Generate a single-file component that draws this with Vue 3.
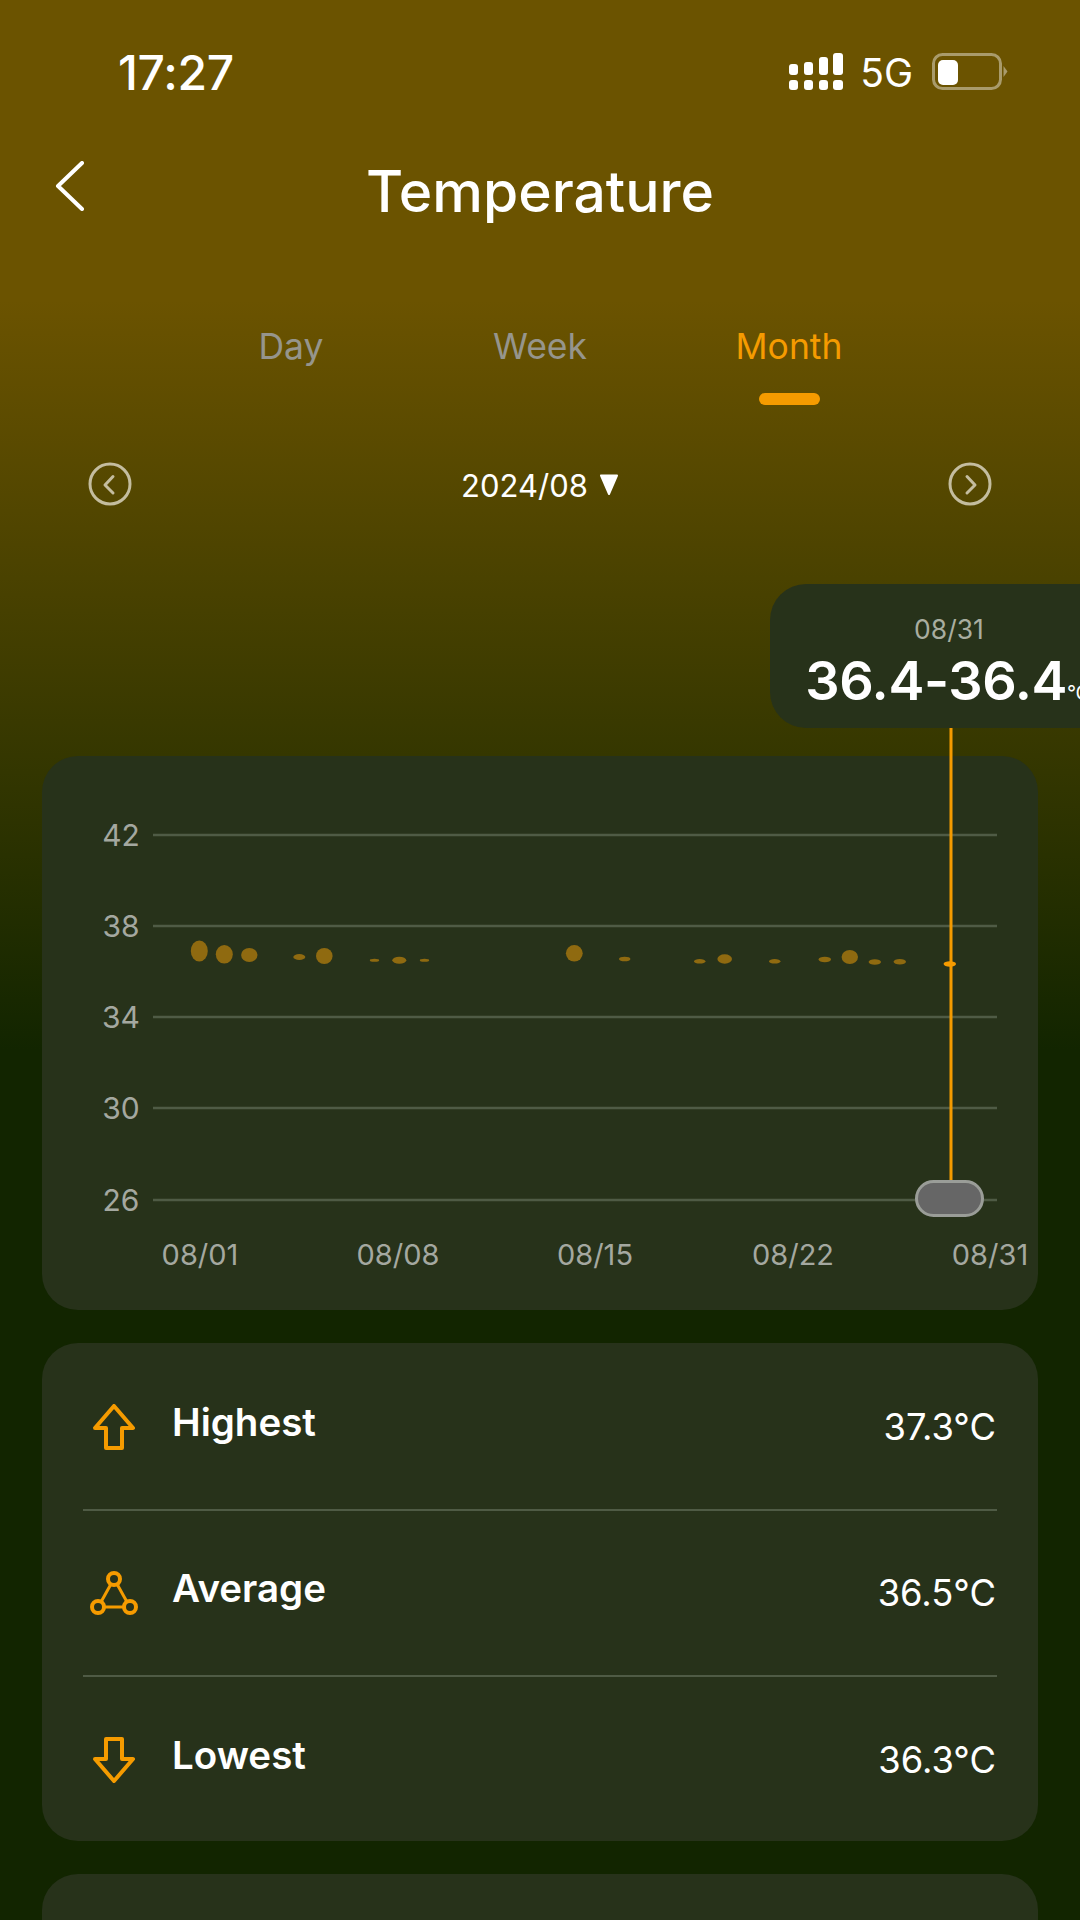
<script setup>
const tabs = [
  { name: "Day" },
  { name: "Week" },
  { name: "Month", active: true },
]

const gridLines = [
  { label: "42", y: 835 },
  { label: "38", y: 926 },
  { label: "34", y: 1017 },
  { label: "30", y: 1108 },
  { label: "26", y: 1200 },
]

const dates = [
  { label: "08/01", x: 200 },
  { label: "08/08", x: 398 },
  { label: "08/15", x: 595 },
  { label: "08/22", x: 793 },
  { label: "08/31", x: 990 },
]

const bubbles = [
  [199.3, 951, 8.5, 10.5],
  [224.3, 954.3, 8.5, 9.3],
  [249.3, 955, 8.2, 7],
  [299.3, 957, 6, 3],
  [324.3, 956, 8.3, 8],
  [374.5, 960.3, 4.7, 1.5],
  [399.3, 960.3, 7, 3.5],
  [424.5, 960.3, 4.7, 1.5],
  [574.3, 953.3, 8.4, 8.3],
  [624.7, 959, 5.7, 2.3],
  [699.7, 961.3, 5.7, 2.3],
  [724.7, 959, 7.3, 4.7],
  [774.7, 961.3, 5.7, 2.3],
  [824.8, 959.5, 6.2, 2.7],
  [849.8, 957, 8.2, 7],
  [874.8, 962, 6.2, 2.8],
  [899.8, 961.7, 6.2, 2.8],
]

const stats = [
  { name: "Highest", value: "37.3°C", icon: "up" },
  { name: "Average", value: "36.5°C", icon: "avg" },
  { name: "Lowest", value: "36.3°C", icon: "down" },
]
</script>

<template>
  <main class="page">
    <div class="status">
      <span class="time">17:27</span>
      <div class="status-right">
        <svg class="signal" width="54" height="38" viewBox="0 0 54 38">
          <rect x="0" y="11" width="9" height="11" rx="3" />
          <rect x="15" y="9" width="9" height="13" rx="3" />
          <rect x="30" y="4" width="9" height="18" rx="3" />
          <rect x="44" y="0" width="10" height="22" rx="3" />
          <rect x="0" y="27" width="9" height="10" rx="3" />
          <rect x="15" y="27" width="9" height="10" rx="3" />
          <rect x="30" y="27" width="9" height="10" rx="3" />
          <rect x="44" y="27" width="10" height="10" rx="3" />
        </svg>
        <span class="net">5G</span>
        <svg class="battery" width="76" height="38" viewBox="0 0 76 38">
          <rect x="1.500" y="1.500" width="67" height="34" rx="9" fill="none" stroke="#fff" stroke-opacity="0.42" stroke-width="3" />
          <rect x="6" y="7" width="20" height="25" rx="5" fill="#fff" />
          <path d="M71.500 13 L75.500 18.500 L71.500 24 Z" fill="#fff" fill-opacity="0.42" />
        </svg>
      </div>
    </div>

    <header class="nav">
      <svg class="back" width="30" height="50" viewBox="0 0 30 50">
        <path d="M27 2 L3 25 L27 48" fill="none" stroke="#fff" stroke-width="4" stroke-linecap="round" stroke-linejoin="round" />
      </svg>
      <h1>Temperature</h1>
    </header>

    <div class="tabs">
      <div v-for="tab in tabs" :key="tab.name" class="tab" :class="{ active: tab.active }">
        <span>{{ tab.name }}</span>
        <i></i>
      </div>
    </div>

    <div class="date-row">
      <svg width="44" height="44" viewBox="0 0 44 44">
        <circle cx="22" cy="22" r="20" class="round" />
        <path d="M25 14.500 L17 23 L25 31" class="round" />
      </svg>
      <span class="month">
        2024/08
        <svg class="caret" width="20" height="22" viewBox="0 0 20 22">
          <path d="M2 1.500 L18 1.500 L10 20 Z" fill="#fff" stroke="#fff" stroke-width="2" stroke-linejoin="round" />
        </svg>
      </span>
      <svg width="44" height="44" viewBox="0 0 44 44">
        <circle cx="22" cy="22" r="20" class="round" />
        <path d="M19 14.500 L27 23 L19 31" class="round" />
      </svg>
    </div>

    <section class="chart-wrap">
      <div class="tooltip">
        <div class="tip-date">08/31</div>
        <div class="tip-value">36.4-36.4<small>°C</small></div>
      </div>

      <div class="card chart-card">
        <svg class="chart" width="996" height="554" viewBox="42 756 996 554">
          <g v-for="line in gridLines" :key="line.label">
            <line x1="153" x2="997" :y1="line.y" :y2="line.y" stroke="#4f5b45" stroke-width="2.500" />
            <text x="121" :y="line.y + 11" text-anchor="middle" class="axis tall">{{ line.label }}</text>
          </g>
          <text v-for="d in dates" :key="d.label" :x="d.x" y="1265" text-anchor="middle" class="axis">{{ d.label }}</text>
          <ellipse v-for="(b, i) in bubbles" :key="i" :cx="b[0]" :cy="b[1]" :rx="b[2]" :ry="b[3]" fill="#8f6a10" />
          <line x1="951" x2="951" y1="728" y2="1182" stroke="#f59b00" stroke-width="3" />
          <ellipse cx="949.800" cy="964" rx="6.200" ry="2.700" fill="#f59b00" />
          <rect x="916.500" y="1181.500" width="66" height="34" rx="17" fill="#666666" stroke="#9a9d98" stroke-width="3" />
        </svg>
      </div>

      <div class="card stats">
        <div v-for="row in stats" :key="row.name" class="stat-row">
          <svg v-if="row.icon === 'up'" class="stat-icon" width="48" height="46" viewBox="0 0 48 46">
            <path d="M24 2 L43 24 L32 24 L32 44 L16 44 L16 24 L5 24 Z" class="orange" />
          </svg>
          <svg v-else-if="row.icon === 'avg'" class="stat-icon" width="48" height="46" viewBox="0 0 48 46">
            <circle cx="24" cy="9" r="6" class="orange" />
            <circle cx="8" cy="37" r="6" class="orange" />
            <circle cx="40" cy="37" r="6" class="orange" />
            <path d="M21 14 L11 32 M27 14 L37 32 M14 37 L34 37" class="orange thin" />
          </svg>
          <svg v-else class="stat-icon" width="48" height="46" viewBox="0 0 48 46">
            <path d="M24 44 L43 22 L32 22 L32 2 L16 2 L16 22 L5 22 Z" class="orange" />
          </svg>
          <span class="stat-name">{{ row.name }}</span>
          <span class="stat-value">{{ row.value }}</span>
        </div>
      </div>

      <div class="card next"></div>
    </section>
  </main>
</template>

<style scoped>
.page {
  width: 1080px;
  height: 1920px;
  overflow: hidden;
  background: linear-gradient(180deg, #6b5300 0, #6b5300 300px, #122500 1050px, #122500 100%);
  font-family: Inter, "Liberation Sans", sans-serif;
  color: #fff;
}

.status {
  height: 144px;
  display: flex;
  align-items: center;
  justify-content: space-between;
  padding: 0 72px 0 118px;
  box-sizing: border-box;
}
.time {
  font-size: 48px;
  font-weight: 500;
  letter-spacing: -0.3px;
}
.status-right {
  display: flex;
  align-items: center;
}
.signal {
  fill: #fff;
  margin-right: 17px;
}
.net {
  font-size: 39px;
  margin-right: 19px;
}

.nav {
  height: 92px;
  display: flex;
  align-items: center;
  justify-content: center;
  position: relative;
}
.back {
  position: absolute;
  left: 55px;
  top: 17px;
}
.nav h1 {
  margin: 2px 0 0;
  font-size: 57px;
  font-weight: 500;
}

.tabs {
  display: grid;
  grid-template-columns: repeat(3, 249px);
  justify-content: center;
  padding-top: 89px;
}
.tab {
  display: flex;
  flex-direction: column;
  align-items: center;
  gap: 24px;
  font-size: 35.500px;
  line-height: 44px;
  color: #96958c;
}
.tab i {
  width: 61px;
  height: 12px;
  border-radius: 6px;
}
.tab.active {
  color: #f59b00;
}
.tab.active i {
  background: #f59b00;
}

.date-row {
  display: flex;
  align-items: center;
  justify-content: space-between;
  margin-top: 57px;
  padding: 0 88px;
  height: 44px;
}
.round {
  fill: none;
  stroke: #c4bd9f;
  stroke-width: 3;
  stroke-linecap: round;
  stroke-linejoin: round;
}
.month {
  display: flex;
  align-items: center;
  gap: 11px;
  font-size: 31px;
  margin-top: 2px;
}

.chart-wrap {
  position: relative;
  padding: 250px 42px 0;
}
.tooltip {
  position: absolute;
  top: 78px;
  left: 770px;
  width: 360px;
  height: 144px;
  border-radius: 36px;
  background: #27321a;
  text-align: center;
}
.tip-date {
  margin-top: 30px;
  padding-right: 2px;
  font-size: 26.500px;
  line-height: 30px;
  color: #a9ada0;
}
.tip-value {
  margin-top: 5px;
  padding-right: 5px;
  font-size: 54px;
  line-height: 64px;
  font-weight: 600;
  letter-spacing: -0.4px;
}
.tip-value small {
  font-size: 20px;
  font-weight: 400;
}

.card {
  width: 996px;
  border-radius: 36px;
  background: #27321a;
}
.chart-card {
  height: 554px;
}
.chart {
  display: block;
  overflow: visible;
}
.axis {
  font-size: 29px;
  fill: #a4a8a0;
}
.axis.tall {
  font-size: 30px;
}

.stats {
  margin-top: 33px;
  height: 498px;
  padding: 2px 41px 0;
  box-sizing: border-box;
}
.stat-row {
  height: 166px;
  display: flex;
  align-items: center;
  box-sizing: border-box;
  border-bottom: 2.500px solid #4f5b45;
}
.stat-row:last-child {
  border-bottom: 0;
}
.stat-icon {
  margin-right: 34px;
  margin-left: 7px;
}
.orange {
  fill: none;
  stroke: #f59b00;
  stroke-width: 4;
  stroke-linejoin: round;
}
.orange.thin {
  stroke-width: 3;
}
.stat-name {
  font-size: 38.500px;
  font-weight: 600;
  margin-top: -11px;
}
.stat-value {
  margin-left: auto;
  margin-right: 1px;
  margin-top: -1px;
  font-size: 36.300px;
}

.next {
  margin-top: 33px;
  height: 200px;
}
</style>
